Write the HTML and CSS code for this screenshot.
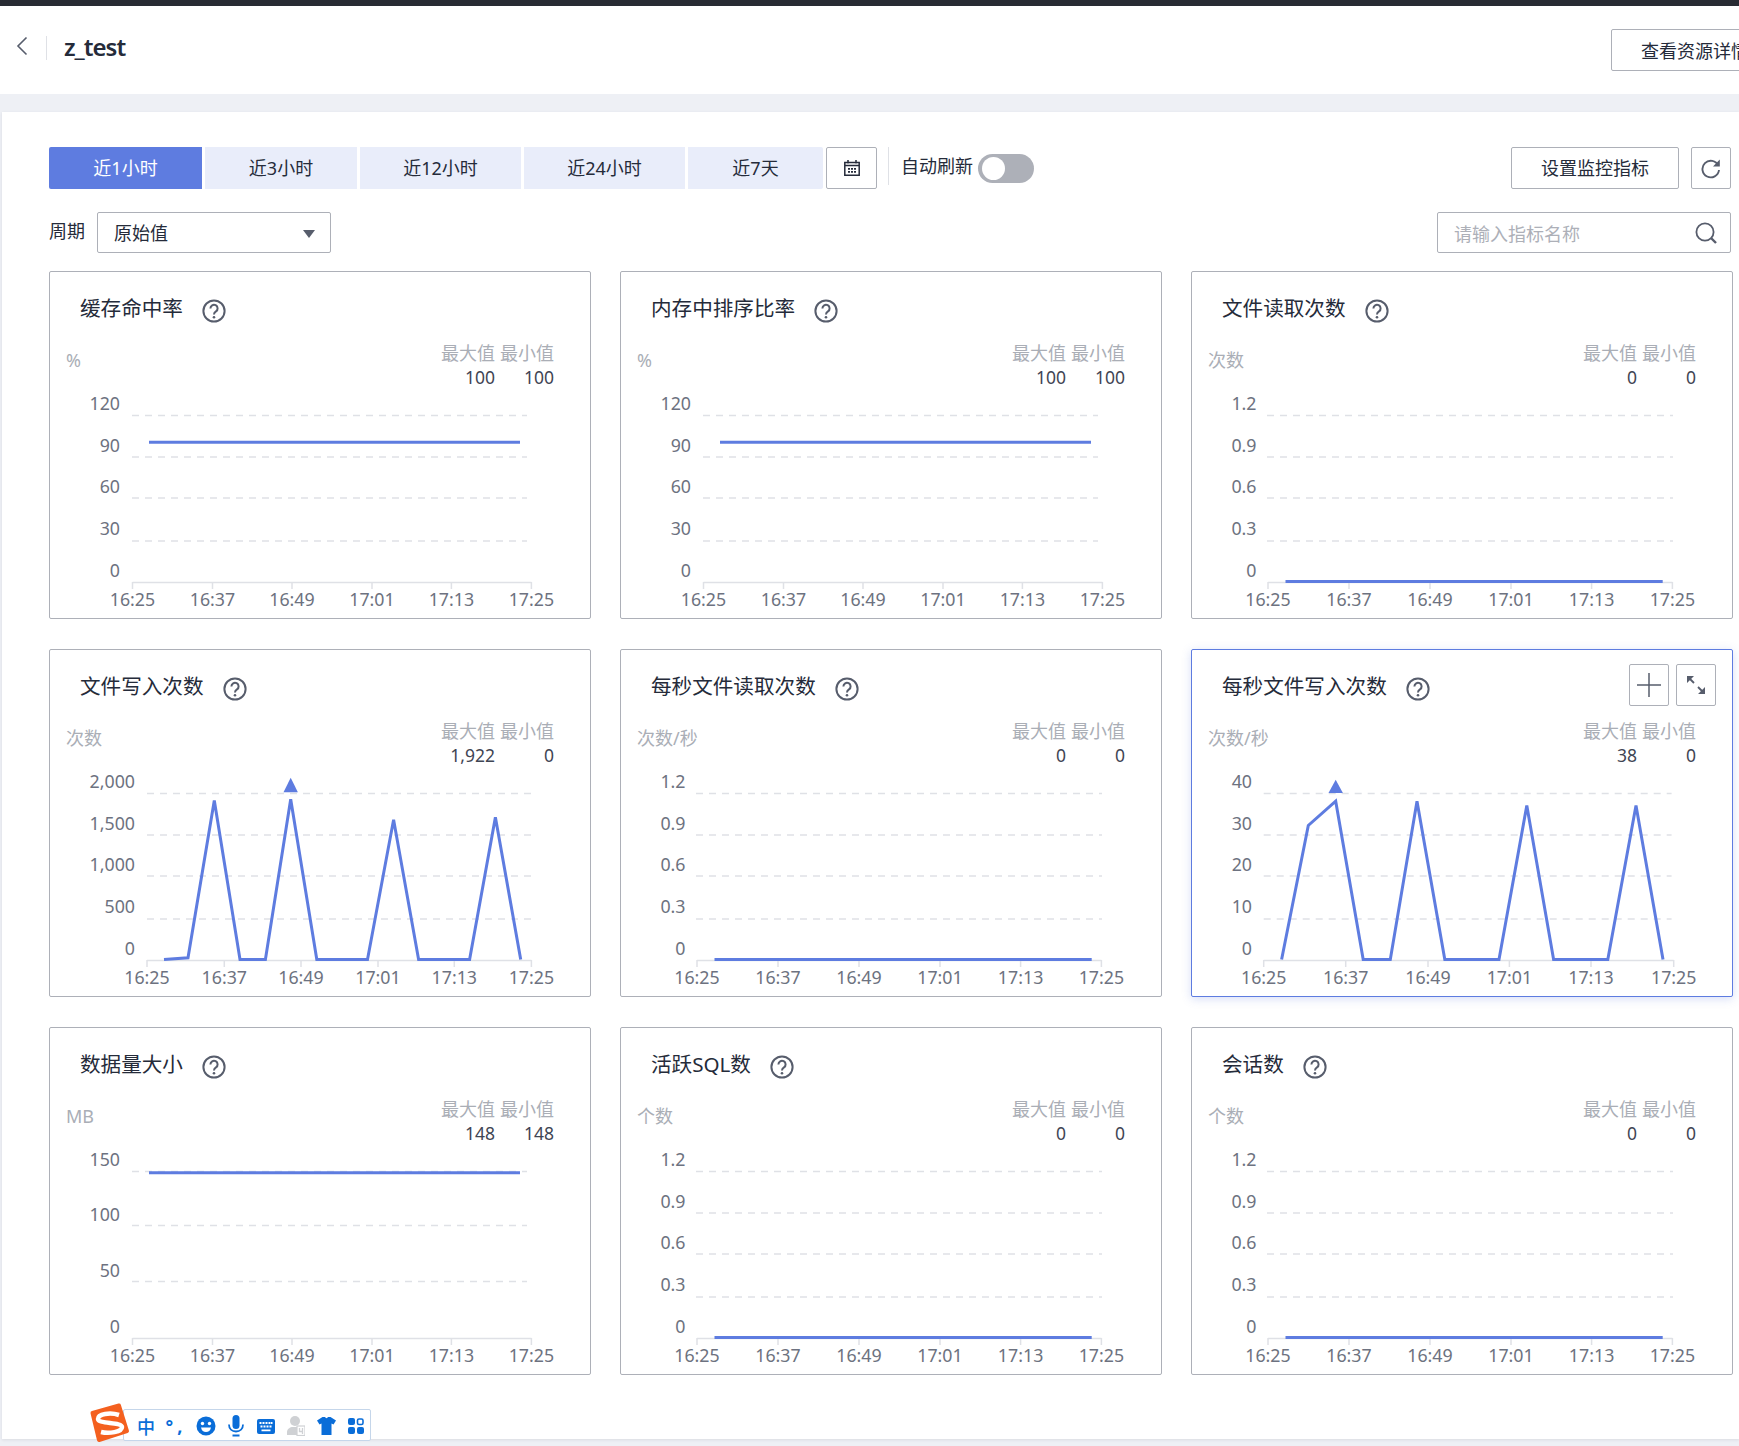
FILE: index.html
```html
<!DOCTYPE html>
<html lang="zh-CN">
<head>
<meta charset="utf-8">
<title>z_test</title>
<link rel="stylesheet" href="styles.css">
</head>
<body>
<svg class="defs" width="0" height="0" aria-hidden="true">
  <symbol id="help" viewBox="0 0 24 24">
    <circle cx="12" cy="12" r="10.600" fill="none" stroke="#575d6c" stroke-width="2"/>
    <path d="M8.400 9.400a3.600 3.600 0 1 1 5.600 3c-1.300.9-2 1.500-2 3" fill="none" stroke="#575d6c" stroke-width="2"/>
    <circle cx="12" cy="18.200" r="1.300" fill="#575d6c"/>
  </symbol>
</svg>

<header class="topbar"></header>
<div class="page-head">
  <svg class="back" width="12" height="20" viewBox="0 0 12 20"><path d="M10.500 1.500 2 10l8.500 8.500" fill="none" stroke="#575d6c" stroke-width="1.600"/></svg>
  <span class="head-rule"></span>
  <h1 class="page-title">z_test</h1>
  <button class="btn btn-detail">查看资源详情</button>
</div>

<main class="panel">
  <div class="toolbar">
    <div class="tabs">
      <button class="tab tab-on">近1小时</button>
      <button class="tab">近3小时</button>
      <button class="tab">近12小时</button>
      <button class="tab">近24小时</button>
      <button class="tab tab-last">近7天</button>
    </div>
    <button class="btn btn-cal">
      <svg width="18" height="18" viewBox="0 0 18 18"><path d="M1.800 3.500h14.400v12.700H1.800zM1.800 6.500h14.400M5 1v3.500M13 1v3.500" fill="none" stroke="#252b3a" stroke-width="1.500"/><path d="M5 9h2v1.800H5zM8 9h2v1.800H8zM11 9h2v1.800h-2zM5 12h2v1.800H5zM8 12h2v1.800H8zM11 12h2v1.800h-2z" fill="#252b3a"/></svg>
    </button>
    <span class="tool-rule"></span>
    <span class="auto-label">自动刷新</span>
    <span class="switch"><span class="knob"></span></span>
    <button class="btn btn-set">设置监控指标</button>
    <button class="btn btn-refresh">
      <svg width="22" height="22" viewBox="0 0 22 22"><path d="M18.300 8.600A8.300 8.300 0 1 0 19 13" fill="none" stroke="#575d6c" stroke-width="1.900"/><path d="M19.800 2.600v6.800h-6.800z" fill="#575d6c"/></svg>
    </button>
  </div>

  <div class="filters">
    <span class="filter-label">周期</span>
    <div class="select">原始值<i class="caret"></i></div>
    <div class="search">
      <span class="placeholder">请输入指标名称</span>
      <svg width="24" height="24" viewBox="0 0 24 24"><circle cx="11" cy="11" r="8.600" fill="none" stroke="#575d6c" stroke-width="1.800"/><path d="m17 17 5 5" stroke="#575d6c" stroke-width="2.400"/></svg>
    </div>
  </div>

  <div class="cards">

    <section class="card">
      <div class="card-head"><h2>缓存命中率</h2><svg class="help"><use href="#help"/></svg></div>
      <div class="meta">
        <span class="unit">%</span>
        <div class="stats"><b>最大值</b><b>最小值</b><span>100</span><span>100</span></div>
      </div>
      <svg class="chart" viewBox="0 0 541 227">
        <path class="grid" d="M83 23.500H478M83 65H478M83 106H478M83 149H478"/>
        <path class="axis" d="M83.500 190.500H482.400M83.500 190v7M163.500 190v7M243 190v7M323 190v7M402.400 190v7M482.400 190v7"/>
        <g class="ylab"><text x="71" y="18">120</text><text x="71" y="60">90</text><text x="71" y="101">60</text><text x="71" y="143">30</text><text x="71" y="185">0</text></g>
        <g class="xlab"><text x="83.500" y="214">16:25</text><text x="163.500" y="214">16:37</text><text x="243" y="214">16:49</text><text x="323" y="214">17:01</text><text x="402.400" y="214">17:13</text><text x="482.400" y="214">17:25</text></g>
        <path class="line" d="M100 50.200H471"/>
      </svg>
    </section>

    <section class="card">
      <div class="card-head"><h2>内存中排序比率</h2><svg class="help"><use href="#help"/></svg></div>
      <div class="meta">
        <span class="unit">%</span>
        <div class="stats"><b>最大值</b><b>最小值</b><span>100</span><span>100</span></div>
      </div>
      <svg class="chart" viewBox="0 0 541 227">
        <path class="grid" d="M83 23.500H478M83 65H478M83 106H478M83 149H478"/>
        <path class="axis" d="M83.500 190.500H482.400M83.500 190v7M163.500 190v7M243 190v7M323 190v7M402.400 190v7M482.400 190v7"/>
        <g class="ylab"><text x="71" y="18">120</text><text x="71" y="60">90</text><text x="71" y="101">60</text><text x="71" y="143">30</text><text x="71" y="185">0</text></g>
        <g class="xlab"><text x="83.500" y="214">16:25</text><text x="163.500" y="214">16:37</text><text x="243" y="214">16:49</text><text x="323" y="214">17:01</text><text x="402.400" y="214">17:13</text><text x="482.400" y="214">17:25</text></g>
        <path class="line" d="M100 50.200H471"/>
      </svg>
    </section>

    <section class="card">
      <div class="card-head"><h2>文件读取次数</h2><svg class="help"><use href="#help"/></svg></div>
      <div class="meta">
        <span class="unit">次数</span>
        <div class="stats"><b>最大值</b><b>最小值</b><span>0</span><span>0</span></div>
      </div>
      <svg class="chart" viewBox="0 0 541 227">
        <path class="grid" d="M76 23.500H482M76 65H482M76 106H482M76 149H482"/>
        <path class="axis" d="M77 190.500H481.400M77 190v7M158 190v7M239 190v7M320 190v7M400.600 190v7M481.400 190v7"/>
        <g class="ylab"><text x="65.500" y="18">1.2</text><text x="65.500" y="60">0.9</text><text x="65.500" y="101">0.6</text><text x="65.500" y="143">0.3</text><text x="65.500" y="185">0</text></g>
        <g class="xlab"><text x="77" y="214">16:25</text><text x="158" y="214">16:37</text><text x="239" y="214">16:49</text><text x="320" y="214">17:01</text><text x="400.600" y="214">17:13</text><text x="481.400" y="214">17:25</text></g>
        <path class="line" d="M94.500 189.500H471.700"/>
      </svg>
    </section>

    <section class="card">
      <div class="card-head"><h2>文件写入次数</h2><svg class="help"><use href="#help"/></svg></div>
      <div class="meta">
        <span class="unit">次数</span>
        <div class="stats"><b>最大值</b><b>最小值</b><span>1,922</span><span>0</span></div>
      </div>
      <svg class="chart" viewBox="0 0 541 227">
        <path class="grid" d="M98 23.500H482M98 65H482M98 106H482M98 149H482"/>
        <path class="axis" d="M98 190.500H482.400M98 190v7M175.300 190v7M252 190v7M329 190v7M405.300 190v7M482.400 190v7"/>
        <g class="ylab"><text x="86" y="18">2,000</text><text x="86" y="60">1,500</text><text x="86" y="101">1,000</text><text x="86" y="143">500</text><text x="86" y="185">0</text></g>
        <g class="xlab"><text x="98" y="214">16:25</text><text x="175.300" y="214">16:37</text><text x="252" y="214">16:49</text><text x="329" y="214">17:01</text><text x="405.300" y="214">17:13</text><text x="482.400" y="214">17:25</text></g>
        <polyline class="line" points="115,189.500 139,187.800 165.300,30.500 191,189.500 216.400,189.500 241.700,29.200 267.800,189.500 318.500,189.500 344.600,49.800 369.600,189.500 420.600,189.500 446.400,47.200 471.700,189.500"/>
        <path class="mark" d="M241.700 7.800 248.900 22.200H234.500z"/>
      </svg>
    </section>

    <section class="card">
      <div class="card-head"><h2>每秒文件读取次数</h2><svg class="help"><use href="#help"/></svg></div>
      <div class="meta">
        <span class="unit">次数/秒</span>
        <div class="stats"><b>最大值</b><b>最小值</b><span>0</span><span>0</span></div>
      </div>
      <svg class="chart" viewBox="0 0 541 227">
        <path class="grid" d="M76 23.500H482M76 65H482M76 106H482M76 149H482"/>
        <path class="axis" d="M77 190.500H481.400M77 190v7M158 190v7M239 190v7M320 190v7M400.600 190v7M481.400 190v7"/>
        <g class="ylab"><text x="65.500" y="18">1.2</text><text x="65.500" y="60">0.9</text><text x="65.500" y="101">0.6</text><text x="65.500" y="143">0.3</text><text x="65.500" y="185">0</text></g>
        <g class="xlab"><text x="77" y="214">16:25</text><text x="158" y="214">16:37</text><text x="239" y="214">16:49</text><text x="320" y="214">17:01</text><text x="400.600" y="214">17:13</text><text x="481.400" y="214">17:25</text></g>
        <path class="line" d="M94.500 189.500H471.700"/>
      </svg>
    </section>

    <section class="card card-active">
      <div class="card-head"><h2>每秒文件写入次数</h2><svg class="help"><use href="#help"/></svg></div>
      <div class="card-actions">
        <button class="btn btn-mini"><svg width="26" height="26" viewBox="0 0 26 26"><path d="M13 1v24M1 13h24" stroke="#575d6c" stroke-width="1.500"/></svg></button>
        <button class="btn btn-mini"><svg width="24" height="24" viewBox="0 0 24 24"><path d="M3 3h7L3 10zM21 21h-7l7-7z" fill="#575d6c"/><path d="m6 6 4 4M18 18l-4-4" stroke="#575d6c" stroke-width="1.800"/></svg></button>
      </div>
      <div class="meta">
        <span class="unit">次数/秒</span>
        <div class="stats"><b>最大值</b><b>最小值</b><span>38</span><span>0</span></div>
      </div>
      <svg class="chart" viewBox="0 0 541 227">
        <path class="grid" d="M72.700 23.500H480.600M72.700 65H480.600M72.700 106H480.600M72.700 149H480.600"/>
        <path class="axis" d="M72.700 190.500H482.700M72.700 190v7M154.700 190v7M237 190v7M318.400 190v7M400 190v7M482.700 190v7"/>
        <g class="ylab"><text x="61" y="18">40</text><text x="61" y="60">30</text><text x="61" y="101">20</text><text x="61" y="143">10</text><text x="61" y="185">0</text></g>
        <g class="xlab"><text x="72.700" y="214">16:25</text><text x="154.700" y="214">16:37</text><text x="237" y="214">16:49</text><text x="318.400" y="214">17:01</text><text x="400" y="214">17:13</text><text x="482.700" y="214">17:25</text></g>
        <polyline class="line" points="90.600,189.500 117.300,55.500 144.700,31.200 172.200,189.500 199.300,189.500 226,31.200 253.800,189.500 308,189.500 335.800,35.500 362.600,189.500 416.800,189.500 445,35.500 472,189.500"/>
        <path class="mark" d="M144.700 9.800 151.900 23H137.500z"/>
      </svg>
    </section>

    <section class="card">
      <div class="card-head"><h2>数据量大小</h2><svg class="help"><use href="#help"/></svg></div>
      <div class="meta">
        <span class="unit">MB</span>
        <div class="stats"><b>最大值</b><b>最小值</b><span>148</span><span>148</span></div>
      </div>
      <svg class="chart" viewBox="0 0 541 227">
        <path class="grid" d="M83 23.500H478M83 77.600H478M83 133.600H478"/>
        <path class="axis" d="M83.500 190.500H482.400M83.500 190v7M163.500 190v7M243 190v7M323 190v7M402.400 190v7M482.400 190v7"/>
        <g class="ylab"><text x="71" y="18">150</text><text x="71" y="73">100</text><text x="71" y="129">50</text><text x="71" y="185">0</text></g>
        <g class="xlab"><text x="83.500" y="214">16:25</text><text x="163.500" y="214">16:37</text><text x="243" y="214">16:49</text><text x="323" y="214">17:01</text><text x="402.400" y="214">17:13</text><text x="482.400" y="214">17:25</text></g>
        <path class="line" d="M100 24.800H471"/>
      </svg>
    </section>

    <section class="card">
      <div class="card-head"><h2>活跃SQL数</h2><svg class="help"><use href="#help"/></svg></div>
      <div class="meta">
        <span class="unit">个数</span>
        <div class="stats"><b>最大值</b><b>最小值</b><span>0</span><span>0</span></div>
      </div>
      <svg class="chart" viewBox="0 0 541 227">
        <path class="grid" d="M76 23.500H482M76 65H482M76 106H482M76 149H482"/>
        <path class="axis" d="M77 190.500H481.400M77 190v7M158 190v7M239 190v7M320 190v7M400.600 190v7M481.400 190v7"/>
        <g class="ylab"><text x="65.500" y="18">1.2</text><text x="65.500" y="60">0.9</text><text x="65.500" y="101">0.6</text><text x="65.500" y="143">0.3</text><text x="65.500" y="185">0</text></g>
        <g class="xlab"><text x="77" y="214">16:25</text><text x="158" y="214">16:37</text><text x="239" y="214">16:49</text><text x="320" y="214">17:01</text><text x="400.600" y="214">17:13</text><text x="481.400" y="214">17:25</text></g>
        <path class="line" d="M94.500 189.500H471.700"/>
      </svg>
    </section>

    <section class="card">
      <div class="card-head"><h2>会话数</h2><svg class="help"><use href="#help"/></svg></div>
      <div class="meta">
        <span class="unit">个数</span>
        <div class="stats"><b>最大值</b><b>最小值</b><span>0</span><span>0</span></div>
      </div>
      <svg class="chart" viewBox="0 0 541 227">
        <path class="grid" d="M76 23.500H482M76 65H482M76 106H482M76 149H482"/>
        <path class="axis" d="M77 190.500H481.400M77 190v7M158 190v7M239 190v7M320 190v7M400.600 190v7M481.400 190v7"/>
        <g class="ylab"><text x="65.500" y="18">1.2</text><text x="65.500" y="60">0.9</text><text x="65.500" y="101">0.6</text><text x="65.500" y="143">0.3</text><text x="65.500" y="185">0</text></g>
        <g class="xlab"><text x="77" y="214">16:25</text><text x="158" y="214">16:37</text><text x="239" y="214">16:49</text><text x="320" y="214">17:01</text><text x="400.600" y="214">17:13</text><text x="481.400" y="214">17:25</text></g>
        <path class="line" d="M94.500 189.500H471.700"/>
      </svg>
    </section>
  </div>

  <div class="ime">
    <svg class="ime-logo" width="40" height="40" viewBox="0 0 40 40">
      <path d="M2.500 10 29 2.500 37 28 9 37z" fill="#f4601f" stroke="#f4601f" stroke-width="4" stroke-linejoin="round"/>
      <path d="M29 12C20 9 8 11 8 16c0 5 24 3 24 8 0 5-13 7-21 5" fill="none" stroke="#fff" stroke-width="4.500"/>
    </svg>
    <span class="ime-item ime-text">中</span>
    <span class="ime-item ime-text ime-punct">°,</span>
    <span class="ime-item"><svg width="20" height="20" viewBox="0 0 20 20"><circle cx="10" cy="10" r="9.500" fill="#0a6dd8"/><circle cx="6.500" cy="7.500" r="1.700" fill="#fff"/><circle cx="13.500" cy="7.500" r="1.700" fill="#fff"/><path d="M5 11.500h10c-.5 3-2.500 4.500-5 4.500s-4.500-1.500-5-4.500z" fill="#fff"/></svg></span>
    <span class="ime-item"><svg width="16" height="22" viewBox="0 0 16 22"><rect x="4.500" y="0" width="7" height="14" rx="3.500" fill="#0a6dd8"/><path d="M1 9.500c0 4.500 3 7 7 7s7-2.500 7-7" fill="none" stroke="#0a6dd8" stroke-width="1.800"/><path d="M4.500 20.500h7" stroke="#0a6dd8" stroke-width="2"/></svg></span>
    <span class="ime-item"><svg width="18" height="15" viewBox="0 0 18 15"><rect width="18" height="15" rx="2" fill="#0a6dd8"/><path d="M2.500 3h2v2h-2zM5.500 3h2v2h-2zM8.500 3h2v2h-2zM11.500 3h2v2h-2zM14 3h1.500v2H14zM3.500 6.500h2v2h-2zM6.500 6.500h2v2h-2zM9.500 6.500h2v2h-2zM12.500 6.500h2v2h-2zM4.500 10.500h9v1.800h-9z" fill="#fff"/></svg></span>
    <span class="ime-item"><svg width="18" height="20" viewBox="0 0 18 20"><circle cx="8" cy="5" r="5" fill="#cfd1d4"/><path d="M0 19v-3c0-3 3-5 6-5h5v8z" fill="#cfd1d4"/><rect x="10" y="10" width="8" height="9.500" fill="#fff" stroke="#cfd1d4" stroke-width="1.200"/><path d="M12.500 12v3.500h3.500M15.500 12v6" fill="none" stroke="#cfd1d4" stroke-width="1.300"/></svg></span>
    <span class="ime-item"><svg width="19" height="18" viewBox="0 0 19 18"><path d="M5.500 0h2.500c.5 1.500 2.500 1.500 3 0h2.500L19 3.500 16.500 7.500 14.500 6.500V18h-10V6.500L2.500 7.500 0 3.500z" fill="#0a6dd8"/></svg></span>
    <span class="ime-item"><svg width="16" height="16" viewBox="0 0 16 16"><rect width="7" height="7" rx="2" fill="#0a6dd8"/><rect x="9.500" y="1" width="5.500" height="5.500" rx="1.500" fill="none" stroke="#0a6dd8" stroke-width="1.600"/><rect y="9" width="7" height="7" rx="2" fill="#0a6dd8"/><rect x="9" y="9" width="7" height="7" rx="2" fill="#0a6dd8"/></svg></span>
  </div>
</main>
</body>
</html>
```

FILE: styles.css
```css
* { box-sizing: border-box; }

html, body {
  margin: 0;
  width: 1739px;
  height: 1446px;
  overflow: hidden;
}

body {
  background: #eef0f5;
  color: #252b3a;
  font-family: "Noto Sans", "Noto Sans CJK SC", sans-serif;
  font-size: 18px;
}

.defs { position: absolute; }

button { font: inherit; color: inherit; }

.topbar { height: 6px; background: #282b33; }

.page-head {
  display: flex;
  align-items: center;
  width: calc(100% + 40px);
  height: 88px;
  padding-left: 16px;
  background: #fff;
}

.back { margin-top: -8px; flex: none; }

.head-rule {
  width: 1px;
  height: 24px;
  margin: -5px 0 0 18px;
  background: #dfe1e6;
}

.page-title {
  margin: -6px 0 0 17px;
  font-size: 24px;
  font-weight: 600;
  letter-spacing: -1px;
  line-height: 30px;
}

.btn {
  display: flex;
  align-items: center;
  justify-content: center;
  padding: 0;
  background: #fff;
  border: 1px solid #adb0b8;
  border-radius: 2px;
  cursor: pointer;
}

.btn-detail {
  width: 168px;
  height: 42px;
  margin-left: auto;
  margin-top: -1px;
}

.panel {
  position: relative;
  margin: 18px 0 0 2px;
  padding: 35px 8px 64px 47px;
  background: #fff;
  box-shadow: 0 1px 3px rgba(37, 43, 58, 0.1);
}

.toolbar { display: flex; align-items: flex-start; height: 42px; }

.tabs {
  display: grid;
  grid-template-columns: 153px 152px 161px 161px 135px;
  column-gap: 3px;
}

.tab {
  height: 42px;
  padding: 0 0 2px;
  background: #e9edfa;
  border: 0;
  cursor: pointer;
}

.tab-on { background: #5e7ce0; color: #fff; border-radius: 2px 0 0 2px; }
.tab-last { border-radius: 0 2px 2px 0; }

.btn-cal { width: 51px; height: 42px; margin-left: 3px; }

.tool-rule { width: 1px; height: 38px; margin-left: 11px; background: #dfe1e6; }

.auto-label { margin: 5px 0 0 12px; line-height: 28px; }

.switch {
  position: relative;
  width: 56px;
  height: 29px;
  margin: 7px 0 0 5px;
  background: #adb0b8;
  border-radius: 15px;
}

.knob {
  position: absolute;
  top: 3px;
  left: 4px;
  width: 23px;
  height: 23px;
  background: #fff;
  border-radius: 50%;
}

.btn-set { width: 168px; height: 42px; margin-left: auto; padding-bottom: 2px; }
.btn-refresh { width: 40px; height: 42px; margin-left: 12px; }

.filters { display: flex; align-items: center; height: 41px; margin-top: 23px; }

.filter-label { width: 48px; margin-top: -5px; }

.select {
  position: relative;
  display: flex;
  align-items: center;
  width: 234px;
  height: 41px;
  padding: 0 0 2px 16px;
  border: 1px solid #adb0b8;
  border-radius: 2px;
}

.caret {
  position: absolute;
  top: 17px;
  right: 15px;
  border-top: 8px solid #575d6c;
  border-left: 6px solid transparent;
  border-right: 6px solid transparent;
}

.search {
  display: flex;
  align-items: center;
  justify-content: space-between;
  width: 294px;
  height: 41px;
  margin-left: auto;
  padding: 0 12px 0 16px;
  border: 1px solid #adb0b8;
  border-radius: 2px;
}

.placeholder { color: #adb0b8; }

.cards {
  display: grid;
  grid-template-columns: repeat(3, 1fr);
  grid-auto-rows: 348px;
  column-gap: 29px;
  row-gap: 30px;
  margin-top: 18px;
}

.card {
  position: relative;
  background: #fff;
  border: 1px solid #adb0b8;
  border-radius: 2px;
}

.card-active {
  border-color: #5e7ce0;
  box-shadow: 0 2px 10px rgba(94, 124, 224, 0.25);
}

.card-head {
  display: flex;
  align-items: center;
  gap: 19px;
  height: 67px;
  padding: 4px 0 0 30px;
}

.card-head h2 {
  margin: 0;
  font-size: 20.6px;
  font-weight: 400;
  line-height: 30px;
}

.help { width: 24px; height: 24px; margin-top: 6px; flex: none; }

.card-actions {
  position: absolute;
  top: 14px;
  right: 16px;
  display: flex;
  gap: 7px;
}

.btn-mini { width: 40px; height: 42px; }

.meta {
  display: flex;
  justify-content: space-between;
  height: 53px;
  padding: 2px 36px 0 16px;
}

.unit { margin-top: 7px; color: #aaaeb6; line-height: 25px; }

.stats {
  display: grid;
  grid-template-columns: auto auto;
  column-gap: 5px;
  text-align: right;
  line-height: 24px;
  align-self: flex-start;
}

.stats b { color: #aaaeb6; font-weight: 400; }
.stats span { color: #3f4554; font-size: 17.5px; }

.chart { display: block; width: 541px; height: 227px; margin-left: -1px; overflow: visible; }

.grid { fill: none; stroke: #dfe1e6; stroke-width: 1.500; stroke-dasharray: 7 6; }
.axis { fill: none; stroke: #dfe1e6; stroke-width: 1.500; }
.line { fill: none; stroke: #5e7ce0; stroke-width: 3; }
.mark { fill: #5e7ce0; }

.ylab, .xlab { fill: #6d7280; font-size: 17.8px; }
.ylab { text-anchor: end; }
.xlab { text-anchor: middle; }

.ime {
  position: absolute;
  left: 121px;
  bottom: -2px;
  display: flex;
  align-items: center;
  width: 248px;
  height: 32px;
  padding: 2px 0 0 7px;
  background: #fff;
  border: 1px solid #c5d6ea;
  border-radius: 2px;
}

.ime-logo { position: absolute; left: -34px; top: -7px; }

.ime-item {
  display: flex;
  align-items: center;
  justify-content: center;
  width: 30px;
  height: 30px;
  flex: none;
}

.ime-text { color: #0a6dd8; font-size: 18px; font-weight: 500; }
.ime-punct { letter-spacing: 4px; font-weight: 700; }
```
